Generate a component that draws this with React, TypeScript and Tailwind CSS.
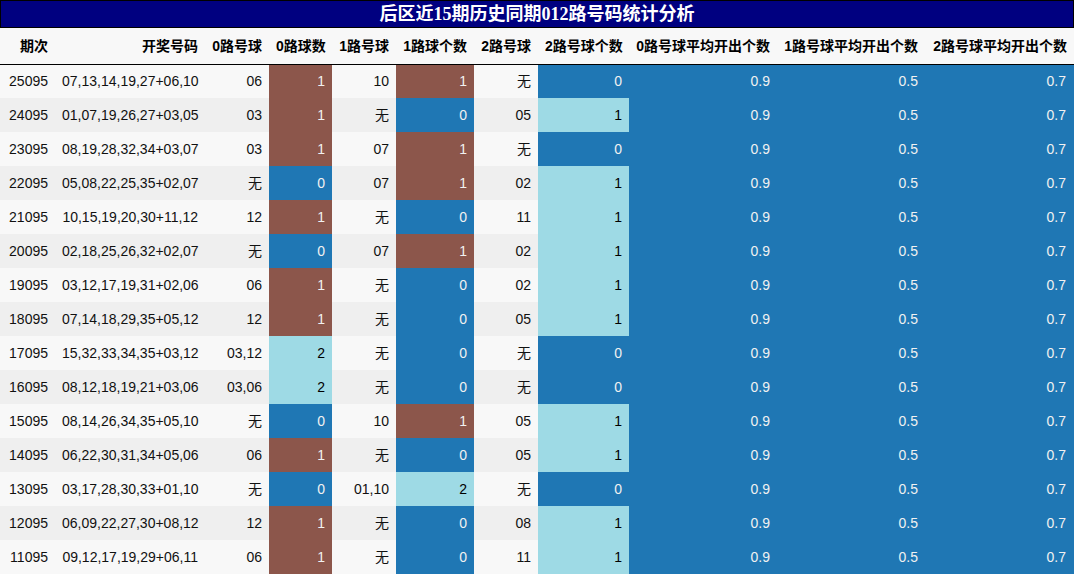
const rows: [string, string, string, number, string, number, string, number][] = [
  ["25095", "07,13,14,19,27+06,10", "06", 1, "10", 1, "无", 0],
  ["24095", "01,07,19,26,27+03,05", "03", 1, "无", 0, "05", 1],
  ["23095", "08,19,28,32,34+03,07", "03", 1, "07", 1, "无", 0],
  ["22095", "05,08,22,25,35+02,07", "无", 0, "07", 1, "02", 1],
  ["21095", "10,15,19,20,30+11,12", "12", 1, "无", 0, "11", 1],
  ["20095", "02,18,25,26,32+02,07", "无", 0, "07", 1, "02", 1],
  ["19095", "03,12,17,19,31+02,06", "06", 1, "无", 0, "02", 1],
  ["18095", "07,14,18,29,35+05,12", "12", 1, "无", 0, "05", 1],
  ["17095", "15,32,33,34,35+03,12", "03,12", 2, "无", 0, "无", 0],
  ["16095", "08,12,18,19,21+03,06", "03,06", 2, "无", 0, "无", 0],
  ["15095", "08,14,26,34,35+05,10", "无", 0, "10", 1, "05", 1],
  ["14095", "06,22,30,31,34+05,06", "06", 1, "无", 0, "05", 1],
  ["13095", "03,17,28,30,33+01,10", "无", 0, "01,10", 2, "无", 0],
  ["12095", "06,09,22,27,30+08,12", "12", 1, "无", 0, "08", 1],
  ["11095", "09,12,17,19,29+06,11", "06", 1, "无", 0, "11", 1],
];

const headers = [
  "期次",
  "开奖号码",
  "0路号球",
  "0路球数",
  "1路号球",
  "1路球个数",
  "2路号球",
  "2路号球个数",
  "0路号球平均开出个数",
  "1路号球平均开出个数",
  "2路号球平均开出个数",
];

const widths = [55, 150, 64, 63, 64, 78, 64, 91, 148, 148, 149];

const BLUE = "bg-[#1f77b4] text-[#f1f1f1]";
const BROWN = "bg-[#8c564b] text-[#f1f1f1]";
const LIGHT = "bg-[#9edae5] text-black";

// colour scaled per column: lowest blue, highest light
function countCell(n: number, max: number) {
  if (n === 0) return BLUE;
  if (n === max) return LIGHT;
  return BROWN;
}

export default function App() {
  return (
    <div
      className="w-[1074px] h-[575px] bg-white overflow-hidden"
      style={{ fontFamily: '"Liberation Sans", "Noto Sans CJK SC", sans-serif' }}
    >
      {/* title */}
      <div
        className="h-[28px] bg-[#000080] border border-black flex items-center justify-center text-white font-bold text-[18px]"
        style={{ fontFamily: '"Liberation Serif", "Noto Sans CJK SC", serif' }}
      >
        后区近15期历史同期012路号码统计分析
      </div>

      <table className="table-fixed border-collapse text-[14px] w-[1074px]">
        <colgroup>
          {widths.map((w, i) => (
            <col key={i} style={{ width: w }} />
          ))}
        </colgroup>
        <thead>
          <tr className="h-[36px] bg-[#f8f8f8] border-b border-black">
            {headers.map((h) => (
              <th key={h} className="px-[7px] pt-[1px] text-right font-bold text-black whitespace-nowrap">
                {h}
              </th>
            ))}
          </tr>
        </thead>
        <tbody>
          {rows.map((r, i) => (
            <tr key={r[0]} className={`h-[34px] ${i % 2 === 0 ? "bg-[#f8f8f8]" : "bg-[#efefef]"}`}>
              <td className="px-[7px] text-right text-[#111]">{r[0]}</td>
              <td className="px-[7px] text-right text-[#111] whitespace-nowrap">{r[1]}</td>
              <td className="px-[7px] text-right text-[#111]">{r[2]}</td>
              <td className={`px-[7px] text-right ${countCell(r[3], 2)}`}>{r[3]}</td>
              <td className="px-[7px] text-right text-[#111]">{r[4]}</td>
              <td className={`px-[7px] text-right ${countCell(r[5], 2)}`}>{r[5]}</td>
              <td className="px-[7px] text-right text-[#111]">{r[6]}</td>
              <td className={`px-[7px] text-right ${countCell(r[7], 1)}`}>{r[7]}</td>
              <td className={`px-[7px] text-right ${BLUE}`}>0.9</td>
              <td className={`px-[7px] text-right ${BLUE}`}>0.5</td>
              <td className={`px-[7px] pr-[8px] text-right ${BLUE}`}>0.7</td>
            </tr>
          ))}
        </tbody>
      </table>
    </div>
  );
}
